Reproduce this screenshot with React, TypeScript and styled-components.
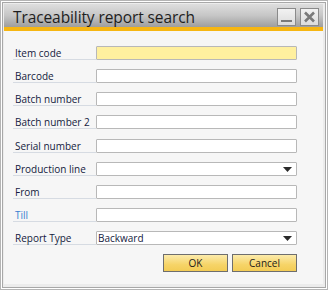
import React from "react";
import styled, {createGlobalStyle} from "styled-components";

const GlobalStyle = createGlobalStyle`
  html, body {
    margin: 0;
    padding: 0;
    background: #ffffff;
  }
`;

interface FieldDef {
    label: string,
    kind: 'text' | 'select',
    value?: string,
    highlight?: boolean,
    link?: boolean,
    spaced?: boolean,
}

const fields: FieldDef[] = [
    {label: 'Item code', kind: 'text', highlight: true},
    {label: 'Barcode', kind: 'text'},
    {label: 'Batch number', kind: 'text'},
    {label: 'Batch number 2', kind: 'text'},
    {label: 'Serial number', kind: 'text', spaced: true},
    {label: 'Production line', kind: 'select'},
    {label: 'From', kind: 'text'},
    {label: 'Till', kind: 'text', link: true},
    {label: 'Report Type', kind: 'select', value: 'Backward'},
];

const Arrow = () => (
    <svg width="9" height="5" viewBox="0 0 9 5">
        <path d="M0 0 H9 L4.5 5 Z" fill="#2a2a2a"/>
    </svg>
);

export default function App() {
    return (
        <>
            <GlobalStyle/>
            <WindowStyle>
                <FrameStyle>
                    <TitleBar>
                        <TitleText>Traceability report search</TitleText>
                        <TitleButtons>
                            <TitleButton aria-label="minimize">
                                <svg width="13" height="12" viewBox="0 0 13 12">
                                    <rect x="1" y="9" width="11" height="2" fill="#7a7a7a"/>
                                </svg>
                            </TitleButton>
                            <TitleButton aria-label="close">
                                <svg width="13" height="12" viewBox="0 0 13 12">
                                    <path d="M2 1.5 L11 10.5 M11 1.5 L2 10.5" stroke="#7a7a7a" strokeWidth="2.6"/>
                                </svg>
                            </TitleButton>
                        </TitleButtons>
                    </TitleBar>
                    <BodyStyle>
                        {fields.map((f) => (
                            <RowStyle key={f.label} $spaced={f.spaced}>
                                <LabelStyle $link={f.link}>{f.label}</LabelStyle>
                                <FieldBox $highlight={f.highlight}>
                                    <FieldText>{f.value || ''}</FieldText>
                                    {f.kind === 'select' ? <Arrow/> : null}
                                </FieldBox>
                            </RowStyle>
                        ))}
                        <ButtonBar>
                            <ButtonStyle>OK</ButtonStyle>
                            <ButtonStyle>Cancel</ButtonStyle>
                        </ButtonBar>
                    </BodyStyle>
                </FrameStyle>
            </WindowStyle>
        </>
    );
}

const WindowStyle = styled.div`
  width: 328px;
  height: 290px;
  box-sizing: border-box;
  border: 1px solid #b4b4b4;
  padding: 1px;
  background: #ffffff;
`

const FrameStyle = styled.div`
  height: 100%;
  box-sizing: border-box;
  border: 1px solid #a8a8a8;
  background: #ececec;
  padding: 1px 2px 3px 1px;
  display: flex;
  flex-direction: column;
`

const TitleBar = styled.div`
  height: 23px;
  flex-shrink: 0;
  display: flex;
  align-items: center;
  justify-content: space-between;
  padding: 0 4px 0 9px;
  background: linear-gradient(#dedede, #c6c6c6 50%, #9e9e9e);
  border-bottom: 4px solid #f6b612;
`

const TitleText = styled.div`
  font-family: "Open Sans", "Liberation Sans", sans-serif;
  font-size: 15.5px;
  color: #1e1e1e;
  letter-spacing: -0.1px;
  padding-top: 2px;
`

const TitleButtons = styled.div`
  display: flex;
  gap: 4px;
  margin-top: 2px;
`

const TitleButton = styled.div`
  width: 17px;
  height: 16px;
  border: 1px solid #8a8a8a;
  background: linear-gradient(#f2f2f2, #dcdcdc);
  display: flex;
  align-items: center;
  justify-content: center;
`

const BodyStyle = styled.div`
  flex: 1;
  background: #f6f6f6;
  padding: 15px 26px 0 9px;
  display: flex;
  flex-direction: column;
  gap: 9px;
`

const RowStyle = styled.div<{ $spaced?: boolean }>`
  display: flex;
  align-items: stretch;
  height: 14px;
  flex-shrink: 0;
  margin-top: ${p => p.$spaced ? '1px' : '0'};
`

const LabelStyle = styled.div<{ $link?: boolean }>`
  width: 83px;
  box-sizing: border-box;
  padding-left: 2px;
  border-bottom: 1px solid #d6dbe2;
  font-family: "Open Sans", "Liberation Sans", sans-serif;
  font-size: 10px;
  line-height: 14px;
  color: ${p => p.$link ? '#3b7fd0' : '#141a40'};
  white-space: nowrap;
`

const FieldBox = styled.div<{ $highlight?: boolean }>`
  flex: 1;
  box-sizing: border-box;
  border: 1px solid #b8b8b8;
  border-radius: 1px;
  background: ${p => p.$highlight ? '#fff09f' : '#ffffff'};
  display: flex;
  align-items: center;
  padding: 0 4px 0 1px;
`

const FieldText = styled.div`
  flex: 1;
  font-family: "Open Sans", "Liberation Sans", sans-serif;
  font-size: 10px;
  line-height: 12px;
  color: #141a40;
`

const ButtonBar = styled.div`
  display: flex;
  justify-content: flex-end;
  gap: 4px;
  flex-shrink: 0;
`

const ButtonStyle = styled.div`
  width: 65px;
  height: 18px;
  box-sizing: border-box;
  border: 1px solid #6e6e6e;
  background: linear-gradient(#fcebab, #f6d468 60%, #f3cc55);
  display: flex;
  align-items: center;
  justify-content: center;
  font-family: "Open Sans", "Liberation Sans", sans-serif;
  font-size: 10px;
  color: #1a1a1a;
`
